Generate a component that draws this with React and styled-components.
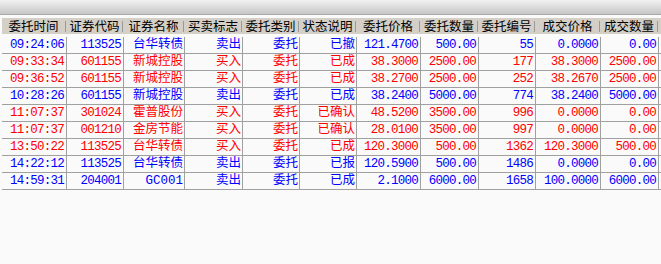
import styled, { createGlobalStyle } from "styled-components";

const GlobalStyle = createGlobalStyle`
  html, body {
    margin: 0;
    padding: 0;
    background: #fafafa;
  }
  body {
    width: 661px;
    height: 264px;
    overflow: hidden;
    font-family: "Noto Sans CJK SC", sans-serif;
  }
`;

const columns = [
  { title: "委托时间", width: 65, num: true },
  { title: "证券代码", width: 57, num: true },
  { title: "证券名称", width: 61 },
  { title: "买卖标志", width: 58 },
  { title: "委托类别", width: 57 },
  { title: "状态说明", width: 57 },
  { title: "委托价格", width: 64, num: true },
  { title: "委托数量", width: 58, num: true },
  { title: "委托编号", width: 57, num: true },
  { title: "成交价格", width: 65, num: true },
  { title: "成交数量", width: 58, num: true },
];

const orders = [
  ["09:24:06", "113525", "台华转债", "卖出", "委托", "已撤", "121.4700", "500.00", "55", "0.0000", "0.00"],
  ["09:33:34", "601155", "新城控股", "买入", "委托", "已成", "38.3000", "2500.00", "177", "38.3000", "2500.00"],
  ["09:36:52", "601155", "新城控股", "买入", "委托", "已成", "38.2700", "2500.00", "252", "38.2670", "2500.00"],
  ["10:28:26", "601155", "新城控股", "卖出", "委托", "已成", "38.2400", "5000.00", "774", "38.2400", "5000.00"],
  ["11:07:37", "301024", "霍普股份", "买入", "委托", "已确认", "48.5200", "3500.00", "996", "0.0000", "0.00"],
  ["11:07:37", "001210", "金房节能", "买入", "委托", "已确认", "28.0100", "3500.00", "997", "0.0000", "0.00"],
  ["13:50:22", "113525", "台华转债", "买入", "委托", "已成", "120.3000", "500.00", "1362", "120.3000", "500.00"],
  ["14:22:12", "113525", "台华转债", "卖出", "委托", "已报", "120.5900", "500.00", "1486", "0.0000", "0.00"],
  ["14:59:31", "204001", "GC001", "卖出", "委托", "已成", "2.1000", "6000.00", "1658", "100.0000", "6000.00"],
];

function App() {
  return (
    <>
      <GlobalStyle />
      <Page>
        <TopBar />
        <HeaderRow>
          {columns.map((c) => (
            <HeadCell key={c.title} $w={c.width}>
              {c.title}
            </HeadCell>
          ))}
        </HeaderRow>
        <Body>
          {orders.map((row, i) => (
            <Row key={i} $buy={row[3] === "买入"}>
              {row.map((v, j) => (
                <Cell key={j} $w={columns[j].width} $num={columns[j].num}>
                  {v}
                </Cell>
              ))}
            </Row>
          ))}
        </Body>
      </Page>
    </>
  );
}

const Page = styled.div`
  display: flex;
  flex-direction: column;
  width: 661px;
  height: 264px;
  background: #fafafa;
`;

const TopBar = styled.div`
  height: 14px;
  background: linear-gradient(#f2f2f2, #c6c6c6);
  border-bottom: 1px solid #a8a8a8;
  margin-bottom: 3px;
`;

const HeaderRow = styled.div`
  display: flex;
  height: 16px;
  margin-left: 2px;
  background: #d4d0c8;
  margin-bottom: 3px;
`;

const HeadCell = styled.div`
  flex: 0 0 ${(p) => p.$w}px;
  display: flex;
  align-items: center;
  justify-content: center;
  font-size: 12.5px;
  line-height: 16px;
  color: #000;
  padding-right: 2px;
  box-sizing: border-box;
  background: linear-gradient(#9a9a9a, #9a9a9a) right 1px center / 1px 11px
    no-repeat;
`;

const Body = styled.div`
  display: flex;
  flex-direction: column;
  margin-left: 2px;
`;

const Row = styled.div`
  display: flex;
  height: 17px;
  box-sizing: border-box;
  border-bottom: 1px solid #a0a0a0;
  color: ${(p) => (p.$buy ? "#ff0000" : "#0000ff")};
`;

const Cell = styled.div`
  flex: 0 0 ${(p) => p.$w}px;
  box-sizing: border-box;
  border-right: 1px solid #a0a0a0;
  padding-right: ${(p) => (p.$num ? "2px" : "1px")};
  text-align: right;
  white-space: nowrap;
  overflow: hidden;
  line-height: 16px;
  font-family: "Liberation Mono", "Noto Sans CJK SC", monospace;
  font-size: 12.5px;
  letter-spacing: ${(p) => (p.$num ? "-0.75px" : "0")};
`;

export default App;
